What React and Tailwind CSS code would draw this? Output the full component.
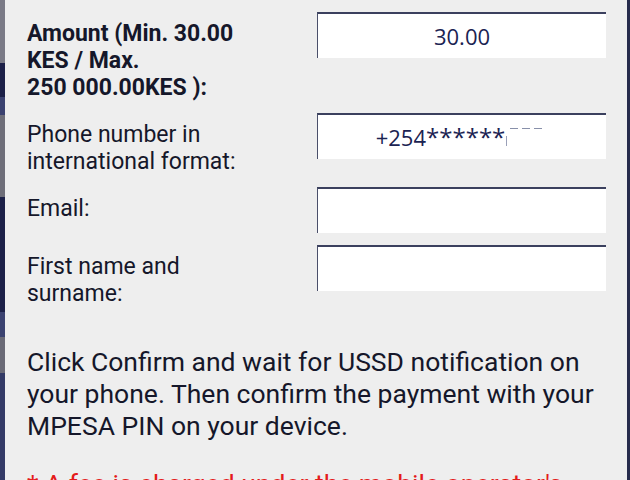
import React from "react";

const rows = [
  { label: ["Amount (Min. 30.00", "KES / Max.", "250 000.00KES ):"], bold: true, value: "30.00" },
  { label: ["Phone number in", "international format:"], value: "phone" },
  { label: ["Email:"], value: "" },
  { label: ["First name and", "surname:"], value: "" },
];

function Field({ value }) {
  return (
    <div className="h-[46px] w-[289px] bg-white border-t-2 border-l border-t-[#3b405e] border-l-[#4a4f6a] flex items-center justify-center text-[22px] text-[#1b2352]" style={{ fontFamily: "'Open Sans', 'Noto Sans', sans-serif" }}>
      {value === "phone" ? (
        <span className="flex items-center -ml-[6px]">
          <span>+254<span className="text-[24px]">******</span></span>
          <span className="flex items-start h-[22px] ml-[1px]">
            <span className="w-[1px] h-[10px] mt-[10px] bg-[#9aa0b8]"></span>
            <span className="w-[8px] h-[1px] mt-[2px] ml-[3px] bg-[#8890aa]"></span>
            <span className="w-[8px] h-[1px] mt-[2px] ml-[4px] bg-[#8890aa]"></span>
            <span className="w-[8px] h-[1px] mt-[2px] ml-[4px] bg-[#8890aa]"></span>
          </span>
        </span>
      ) : (
        value
      )}
    </div>
  );
}

export default function App() {
  return (
    <div className="w-[630px] h-[480px] overflow-hidden flex bg-[#eeeeee]" style={{ fontFamily: "Roboto, 'Liberation Sans', sans-serif" }}>
      <div className="w-[5px] flex flex-col shrink-0">
        <div className="h-[63px] bg-[#7a7a86]"></div>
        <div className="h-[34px] bg-[#1c2048]"></div>
        <div className="h-[18px] bg-[#3b4270]"></div>
        <div className="h-[82px] bg-[#6e6e79]"></div>
        <div className="h-[115px] bg-[#1c2048]"></div>
        <div className="h-[25px] bg-[#3b4270]"></div>
        <div className="h-[36px] bg-[#6a6a76]"></div>
        <div className="flex-1 bg-[#333a66]"></div>
      </div>
      <div className="flex-1 flex flex-col pl-[22px] pt-[12px] text-[#15172a]">
        <div className="flex flex-col gap-[12px]">
          {rows.map((r, i) => (
            <div key={i} className="flex">
              <div className={`w-[290px] pt-[8px] text-[23px] leading-[27px] whitespace-nowrap ${r.bold ? "font-bold" : ""}`}>
                {r.label.map((l, j) => (
                  <div key={j}>{l}</div>
                ))}
              </div>
              <Field value={r.value} />
            </div>
          ))}
        </div>
        <p className="mt-[39px] text-[26.5px] leading-[32px] whitespace-nowrap">
          Click Confirm and wait for USSD notification on
          <br />
          your phone. Then confirm the payment with your
          <br />
          MPESA PIN on your device.
        </p>
        <p className="mt-[26px] text-[26.5px] leading-[32px] text-[#e41b1b] whitespace-nowrap">
          * A fee is charged under the mobile operator's
        </p>
      </div>
      <div className="w-[3px] shrink-0 bg-[#262b4c]"></div>
    </div>
  );
}
